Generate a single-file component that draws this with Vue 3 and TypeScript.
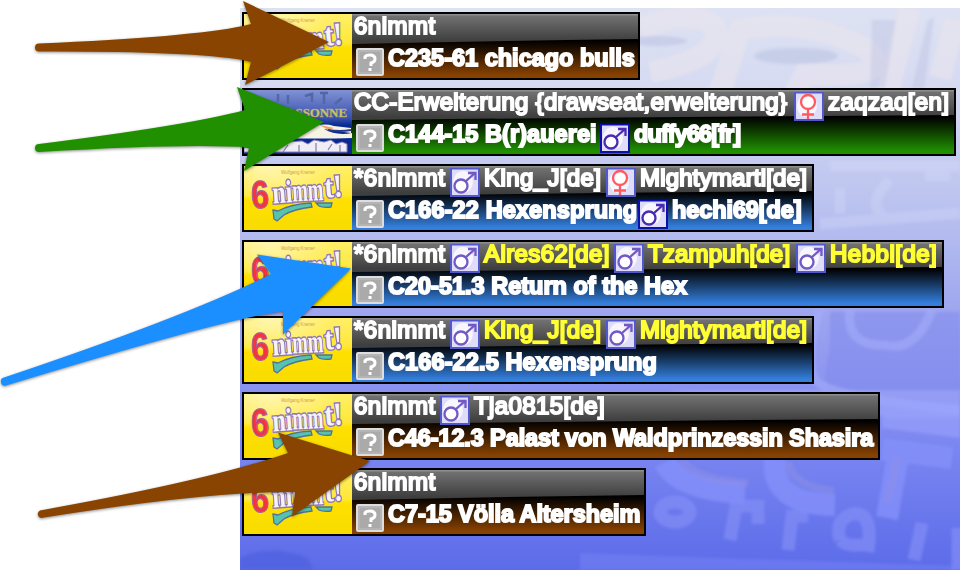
<script setup lang="ts">
type Item = { kind: 'text'; value: string; width: number; ls?: number; hot?: boolean } | { kind: 'm' | 'f' }
interface Game { tone: string; cover: 'six' | 'carc'; width: number; players: Item[]; title: Item[] }

const t = (value: string, width: number, ls = 0.2, hot = false): Item => ({ kind: 'text', value, width, ls, hot })
const m: Item = { kind: 'm' }
const f: Item = { kind: 'f' }

const games: Game[] = [
  { tone: 'brown', cover: 'six', width: 398, players: [t('6nimmt', 96, 0.5)], title: [t('C235-61 chicago bulls', 250, 0)] },
  { tone: 'green', cover: 'carc', width: 714, players: [t('CC-Erweiterung {drawseat,erweiterung}', 440, 0.28), f, t('zaqzaq[en]', 124, 0.4)], title: [t('C144-15 B(r)auerei', 212, 0.05), m, t('duffy66[fr]', 120, -0.9)] },
  { tone: 'blue', cover: 'six', width: 572, players: [t('*6nimmt', 96, 0.5), m, t('King_J[de]', 122, 0.4), f, t('Mightymarti[de]', 170)], title: [t('C166-22 Hexensprung', 250, 0.12), m, t('hechi69[de]', 134, -0.1)] },
  { tone: 'blue', cover: 'six', width: 702, players: [t('*6nimmt', 96, 0.5), m, t('Aires62[de]', 130, 0.4, true), m, t('Tzampuh[de]', 148, 0.2, true), m, t('Hebbi[de]', 110, 0.5, true)], title: [t('C20-51.3 Return of the Hex', 310, 0)] },
  { tone: 'blue', cover: 'six', width: 572, players: [t('*6nimmt', 96, 0.5), m, t('King_J[de]', 122, 0.4, true), m, t('Mightymarti[de]', 170, 0.2, true)], title: [t('C166-22.5 Hexensprung', 280, 0.12)] },
  { tone: 'brown', cover: 'six', width: 638, players: [t('6nimmt', 86, 0.5), m, t('Tja0815[de]', 140, 0.4)], title: [t('C46-12.3 Palast von Waldprinzessin Shasira', 490, -0.12)] },
  { tone: 'brown', cover: 'six', width: 404, players: [t('6nimmt', 96, 0.5)], title: [t('C7-15 Völla Altersheim', 260, -0.07)] },
]

const arrows = [
  { color: '#884400', d: 'M39 43.5Q190 37 243 26L251 24L243 1L329 42L245 85L251 62L243 60Q190 51 39 51.5A4 4 0 0 1 39 43.5Z' },
  { color: '#209000', d: 'M39 144Q190 125 245 110L237 87L324 122L244 171L249 147.5Q190 143 39 152A4 4 0 0 1 39 144Z' },
  { color: '#1b8fff', d: 'M4 377.500Q190 315 271 274L257 254.500L351 268.500L283 334.500V311Q220 320 6 385.500A4 4 0 0 1 4 377.500Z' },
  { color: '#884400', d: 'M40 510.500Q210 480 288 453L278 432.500L370 461L292 516.500L295 492Q210 491 41 518A4 4 0 0 1 40 510.500Z' },
]
</script>

<template>
  <main class="page">
    <section class="board">
      <svg class="backdrop" viewBox="0 0 720 562" aria-hidden="true">
        <defs>
          <linearGradient id="sky" x1="0" y1="0" x2="0" y2="1">
            <stop offset="0" stop-color="#dde2f3" /><stop offset=".15" stop-color="#d5daf2" />
            <stop offset=".37" stop-color="#b8c0ef" /><stop offset=".6" stop-color="#959df0" />
            <stop offset=".8" stop-color="#7884f0" /><stop offset="1" stop-color="#5c6ce9" />
          </linearGradient>
          <filter id="soft"><feGaussianBlur stdDeviation="1.5" /></filter>
        </defs>
        <rect width="720" height="562" fill="url(#sky)" />
        <g filter="url(#soft)" fill="none">
          <g stroke="#e8e4ec" stroke-width="22" opacity=".65">
            <path d="M400 20Q450 0 475 18Q485 50 410 64M478 90L500 22Q560 8 625 40Q660 72 565 66L550 95M645 95L670 0M700 70L715 12" />
          </g>
          <g fill="#b6bede" opacity=".5">
            <ellipse cx="417" cy="33" rx="30" ry="5" /><ellipse cx="556" cy="48" rx="42" ry="8" />
            <path d="M632 12L656 12L645 80L630 80ZM688 12L694 10L684 80L672 80Z" opacity=".7" />
          </g>
          <g stroke="#d8dcfa" stroke-width="11" opacity=".32">
            <path d="M590 158H720M600 180V205M650 172Q625 195 645 210M685 168H710M580 216L720 205" />
          </g>
          <path d="M590 304H720V410H610Q575 405 590 340Z" fill="#7f89eb" opacity=".5" />
          <path d="M610 302Q605 338 645 337Q675 345 692 302M580 300Q565 350 574 370Q583 389 720 402" stroke="#a4adfa" stroke-width="9" opacity=".6" />
          <path d="M426 382H720V410H655Z" fill="#a0a6f7" opacity=".6" />
          <path d="M642 390L720 396V430L642 420Z" fill="#98a2fc" opacity=".6" />
          <g stroke="#8590fa" stroke-width="22" opacity=".8">
            <path d="M425 454Q438 482 505 485M535 450Q530 496 595 497M658 447L647 510M642 441L712 450" />
          </g>
          <g stroke="#8d8ee8" stroke-width="8" opacity=".55">
            <path d="M442 452Q455 472 508 475M548 454Q553 479 594 483M658 448L647 495" />
          </g>
          <g stroke="#828df6" stroke-width="13" opacity=".7">
            <ellipse cx="435" cy="504" rx="15" ry="10" />
            <path d="M490 532L496 498H518V516M548 542L552 508H568M600 532Q594 512 612 506Q634 502 628 544M600 532Q608 540 628 536M682 515L674 552M718 520V562" />
          </g>
          <path d="M0 550Q30 535 68 550L73 562H0Z" fill="#4f60de" opacity=".7" />
          <path d="M340 545L720 558V562H340Z" fill="#7884f5" opacity=".5" />
        </g>
      </svg>

      <div class="games">
        <article v-for="(g, i) in games" :key="i" class="game" :class="g.tone" :style="{ width: g.width + 'px' }">
          <svg v-if="g.cover === 'six'" class="cover" viewBox="0 0 108 64">
            <defs>
              <linearGradient id="lemon" x1="0" y1="0" x2="0" y2="1">
                <stop offset="0" stop-color="#ffef68" /><stop offset=".45" stop-color="#ffe838" /><stop offset=".52" stop-color="#ffe000" /><stop offset="1" stop-color="#f8dc00" />
              </linearGradient>
              <radialGradient id="pale" cx=".25" cy="0" r=".6"><stop offset="0" stop-color="#fff6b0" /><stop offset="1" stop-color="#fff6b0" stop-opacity="0" /></radialGradient>
            </defs>
            <rect width="108" height="64" fill="url(#lemon)" />
            <rect width="108" height="64" fill="url(#pale)" />
            <text class="author" x="37" y="7.500" textLength="34">Wolfgang Kramer</text>
            <text class="six" x="7" y="42" textLength="18" lengthAdjust="spacingAndGlyphs" transform="rotate(-3 16 30)">6</text>
            <g class="nimmt">
              <text x="28.500" y="37" textLength="20" lengthAdjust="spacingAndGlyphs" transform="rotate(-4 36 30)">ni</text>
              <text x="48.500" y="35" textLength="31" lengthAdjust="spacingAndGlyphs" transform="rotate(-3 60 30)">mm</text>
              <text x="80.500" y="31" textLength="18" lengthAdjust="spacingAndGlyphs" transform="rotate(-5 90 22)">t!</text>
            </g>
            <path d="M29 44L34 45Q47 38 67 37L68 41Q50 43 40 49L33 55L30 53ZM72 37L88 37L87 41Q79 42 75 40Z" fill="#58c3ad" stroke="#4f719d" stroke-width="1.300" />
          </svg>
          <svg v-else class="cover" viewBox="0 0 108 64">
            <defs><linearGradient id="night" x1="0" y1="0" x2="0" y2="1"><stop offset="0" stop-color="#8292d4" /><stop offset=".45" stop-color="#344fae" /><stop offset=".55" stop-color="#0a2a91" /><stop offset="1" stop-color="#0a2796" /></linearGradient></defs>
            <rect width="108" height="64" fill="url(#night)" />
            <path d="M34 4V12M44 5V14M61 6L68 4V12M76 3H84M80 3V14M91 14L98 8" stroke="#5366a5" stroke-width="2.500" fill="none" />
            <text class="carc" x="5" y="27" textLength="98" lengthAdjust="spacingAndGlyphs">CARCASSONNE</text>
            <path d="M40 44Q75 31 90 36L107 38V43L80 39Q92 46 108 43V48Q75 49 36 48Z" fill="#f6f3e3" />
            <path d="M76 35L90 38L84 40Z" fill="#e6a26e" />
            <path d="M84 40Q96 42 107 40" fill="none" stroke="#263b86" stroke-width="2" />
            <path d="M0 57L12 59L30 58L43 52L58 51L64 54L70 50L80 52L87 50L92 54L98 52L103 54V62H0Z" fill="#f0edf5" stroke="#8b81b7" />
            <path d="M39 62L44 55M55 62V55M72 62V53M84 60L88 54M96 62V55" stroke="#8878ae" stroke-width="1.200" />
          </svg>

          <div class="info">
            <div v-for="(items, row) in [g.players, g.title]" :key="row" class="line" :class="{ title: row === 1 }">
              <svg v-if="row === 1" class="help" viewBox="0 0 28 28">
                <rect x="1" y="1" width="26" height="26" rx="1" fill="#aaa" stroke="#ddd" stroke-width="2" />
                <rect x="3" y="3" width="22" height="22" fill="none" stroke="#bfbfbf" />
                <path d="M9 11V9Q10 7 14 7Q19 7 19 11Q19 14 15 15V18M14 20V23" fill="none" stroke="#fff" stroke-width="3" />
              </svg>
              <template v-for="(item, k) in items" :key="k">
                <span v-if="item.kind === 'text'" class="label" :class="{ hot: item.hot }" :style="{ width: item.width + 'px', letterSpacing: item.ls + 'px' }">{{ item.value }}</span>
                <svg v-else class="sex" viewBox="0 0 30 29">
                  <rect class="edge" width="30" height="29" />
                  <rect x="2" y="1.500" width="26" height="25.500" fill="#dedcf8" />
                  <ellipse cx="13" cy="14" rx="10" ry="11" fill="#fff" opacity=".75" />
                  <g v-if="item.kind === 'm'" class="male" fill="none" stroke-width="2.300">
                    <circle cx="11" cy="18" r="6.500" fill="#fff" /><path d="M15.500 13.500L25 5M18 5H25.500V12" />
                  </g>
                  <g v-else fill="none" stroke="#ff5a60" stroke-width="2.300">
                    <circle cx="14" cy="10" r="7" fill="#fff" /><path d="M14 17V27M8 22.500H20" />
                  </g>
                </svg>
              </template>
            </div>
          </div>
          <svg class="gloss" viewBox="0 0 100 30" preserveAspectRatio="none">
            <defs><linearGradient id="shine" x1="0" y1="0" x2="0" y2="1"><stop offset="0" stop-color="#fff" stop-opacity=".46" /><stop offset="1" stop-color="#fff" stop-opacity=".22" /></linearGradient></defs>
            <path d="M0 0H100V25Q50 27 0 30Z" fill="url(#shine)" /><path d="M0 0H100V1.500H0Z" fill="#fff" opacity=".2" />
          </svg>
        </article>
      </div>
    </section>

    <svg class="arrows" viewBox="0 0 960 570" aria-hidden="true">
      <path v-for="(a, i) in arrows" :key="i" :d="a.d" :fill="a.color" />
    </svg>
  </main>
</template>

<style>
body { margin: 0; background: #fff; overflow: hidden; }
</style>

<style scoped>
.page { position: relative; box-sizing: border-box; width: 960px; height: 570px; padding: 8px 0 0 240px; overflow: hidden; background: #fff; font-family: "Liberation Sans", Arial, sans-serif; }
.board { position: relative; width: 720px; height: 562px; }
.backdrop { position: absolute; inset: 0; width: 720px; height: 562px; }
.games { position: relative; display: flex; flex-direction: column; gap: 8px; padding: 4px 0 0 2px; }
.game { position: relative; display: flex; box-sizing: border-box; height: 68px; border: 2px solid #000; background: linear-gradient(#000 0 42%, var(--tone) 96%); }
.brown { --tone: #884200; }
.green { --tone: #209000; }
.blue { --tone: #347fdd; }
.cover { flex: none; width: 108px; height: 64px; }
.gloss { position: absolute; left: 108px; top: 0; width: calc(100% - 108px); height: 30px; }
.info { position: relative; z-index: 1; padding-left: 2px; }
.line { display: flex; height: 32px; padding-top: 1px; box-sizing: border-box; font-size: 24px; line-height: 24px; color: #fff; white-space: nowrap; }
.title { font-weight: bold; font-size: 23.5px; }
.label { flex: none; margin-top: -1px; -webkit-text-stroke: 2.1px currentColor; }
.title .label { margin-top: -1px; -webkit-text-stroke-width: 1.9px; }
.hot { color: #ffff32; }
.help { flex: none; width: 28px; height: 28px; margin: 1px 4px 0 2px; }
.sex { flex: none; width: 30px; height: 29px; margin: 1px 4px 0 0; }
.edge { fill: #5058cb; }
.male { stroke: #7259c6; }
.title .edge { fill: #0d10ad; }
.title .male { stroke: #4a2bb2; }
.author { font-size: 4.5px; fill: #d49d43; }
.six { font: bold 39px "Liberation Sans", sans-serif; fill: #f8323e; stroke: #a8619c; stroke-width: 1.2px; }
.nimmt { font: bold 32px "Liberation Serif", serif; fill: #f7f3f5; stroke: #8f78b9; stroke-width: 3px; paint-order: stroke; }
.carc { font: bold 13px "Liberation Serif", serif; fill: #d3c766; stroke: #b4a866; stroke-width: .5px; }
.arrows { position: absolute; inset: 0; width: 960px; height: 570px; pointer-events: none; filter: drop-shadow(0 1.5px 1.5px rgba(0, 0, 0, .45)); }
</style>
